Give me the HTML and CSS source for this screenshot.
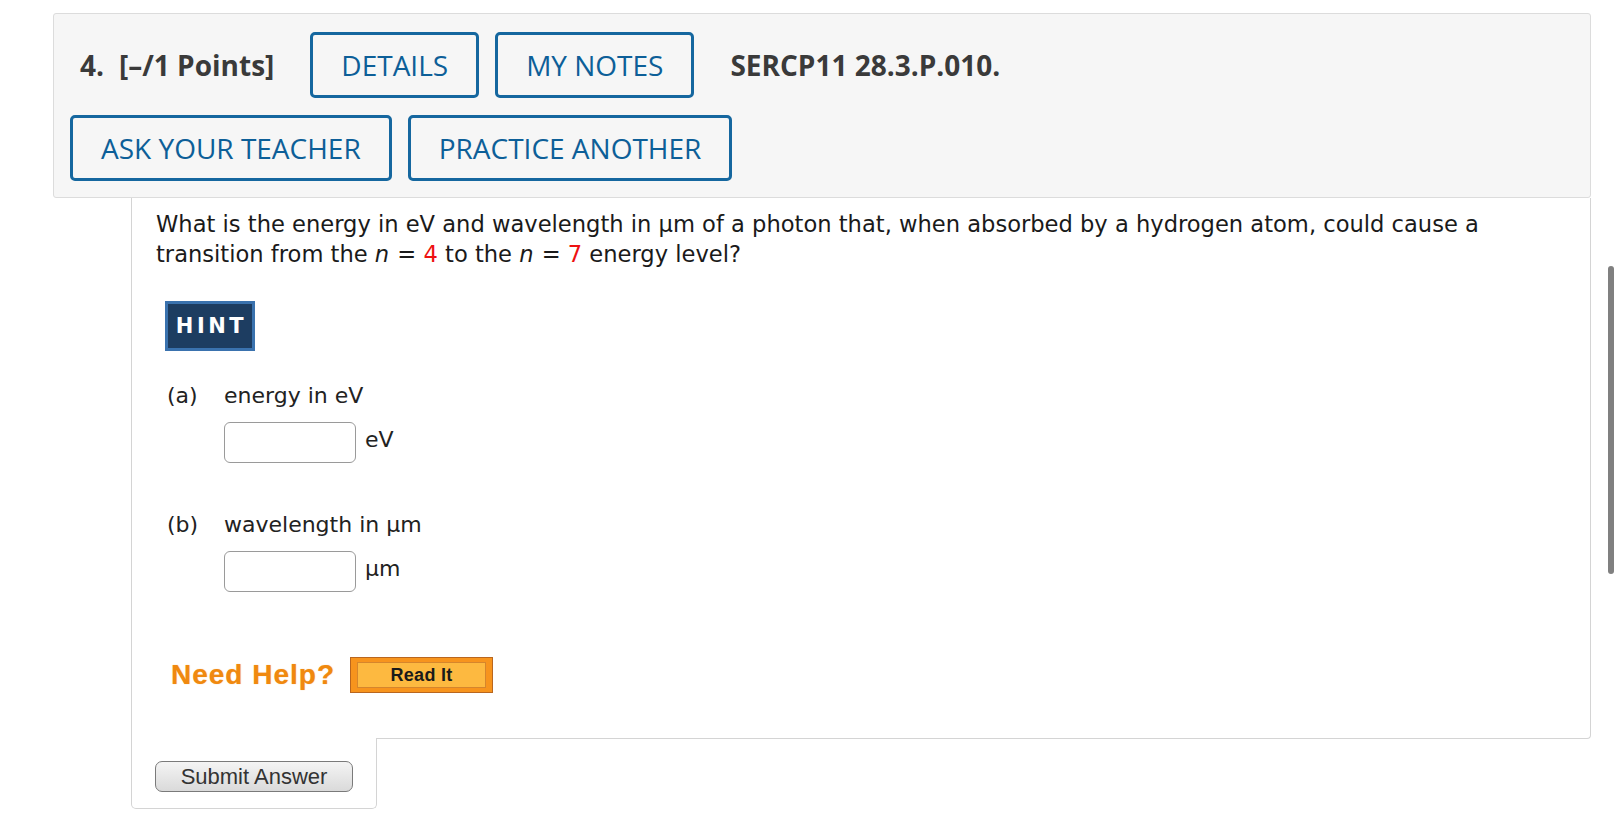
FILE: index.html
```html
<!DOCTYPE html>
<html lang="en">
<head>
<meta charset="utf-8">
<title>Question 4</title>
<link rel="stylesheet" href="styles.css">
</head>
<body>
<div class="page">
  <div class="qhead">
    <div class="row row-top">
      <span class="qnum">4.</span>
      <span class="points">[–/1 Points]</span>
      <span class="btn btn-first">DETAILS</span>
      <span class="btn">MY NOTES</span>
      <span class="qid">SERCP11 28.3.P.010.</span>
    </div>
    <div class="row row-bottom">
      <span class="btn">ASK YOUR TEACHER</span>
      <span class="btn">PRACTICE ANOTHER</span>
    </div>
  </div>

  <div class="qbody">
    <p class="question">What is the energy in eV and wavelength in µm of a photon that, when absorbed by a hydrogen atom, could cause a transition from the <i class="var">n</i> = <span class="red">4</span> to the <i class="var">n</i> = <span class="red">7</span> energy level?</p>

    <div class="hint">HINT</div>

    <div class="part part-a">
      <div class="part-label"><span class="letter">(a)</span><span>energy in eV</span></div>
      <div class="answer"><span class="input"></span><span class="unit">eV</span></div>
    </div>

    <div class="part part-b">
      <div class="part-label"><span class="letter">(b)</span><span>wavelength in µm</span></div>
      <div class="answer"><span class="input"></span><span class="unit">µm</span></div>
    </div>

    <div class="help">
      <span class="need">Need Help?</span>
      <span class="readit"><span class="readit-inner">Read It</span></span>
    </div>
  </div>

  <div class="submit-tab">
    <span class="submit">Submit Answer</span>
  </div>
</div>
<div class="scrollbar"></div>
</body>
</html>
```

FILE: styles.css
```css
html, body {
  margin: 0;
  padding: 0;
  background: #ffffff;
}

body {
  width: 1620px;
  height: 833px;
  overflow: hidden;
}

.page {
  padding: 13px 29px 0 53px;
}

.qhead {
  background: #f6f6f6;
  border: 1px solid #dcdcdc;
  border-radius: 3px;
  padding: 18px 0 16px;
  font-family: "Open Sans", "Liberation Sans", sans-serif;
}

.row {
  display: flex;
  align-items: center;
  height: 66px;
}

.row-top {
  padding-left: 26px;
}

.row-bottom {
  margin-top: 17px;
  padding-left: 16px;
  gap: 16px;
}

.qnum,
.points,
.qid {
  font-weight: 700;
  font-size: 28px;
  color: #3a3a3a;
}

.points {
  margin-left: 15px;
}

.qid {
  margin-left: 36px;
}

.btn {
  box-sizing: border-box;
  height: 66px;
  display: inline-flex;
  align-items: center;
  padding: 0 28px;
  border: 3px solid #15679f;
  border-radius: 5px;
  color: #0d5f98;
  font-size: 28px;
  font-weight: 500;
  white-space: nowrap;
}

.row-top .btn {
  margin-left: 16px;
}

.row-top .btn-first {
  margin-left: 36px;
}

.qbody {
  margin-left: 78px;
  border-left: 1px solid #d4d4d4;
  border-right: 1px solid #d4d4d4;
  border-bottom: 1px solid #d4d4d4;
  border-bottom-right-radius: 4px;
  padding: 11px 70px 45px 24px;
  font-family: "DejaVu Sans", Verdana, sans-serif;
  color: #222222;
  font-size: 22px;
  line-height: 30px;
}

.question {
  margin: 0;
  font-size: 22.6px;
  color: #1a1a1a;
}

.var {
  padding-right: 1px;
}

.red {
  color: #ee1111;
}

.hint {
  box-sizing: border-box;
  width: 90px;
  height: 50px;
  margin: 32px 0 0 9px;
  background: #1d3d61;
  border: 3px solid #3a72ae;
  color: #ffffff;
  font-weight: 700;
  font-size: 21px;
  letter-spacing: 3.5px;
  padding-left: 3px;
  display: flex;
  align-items: center;
  justify-content: center;
}

.part {
  margin-left: 11px;
}

.part-a {
  margin-top: 30px;
}

.part-b {
  margin-top: 47px;
}

.part-label {
  display: flex;
}

.letter {
  width: 57px;
}

.answer {
  display: flex;
  align-items: flex-start;
  margin: 11px 0 0 57px;
}

.input {
  box-sizing: border-box;
  width: 132px;
  height: 41px;
  border: 1px solid #9a9a9a;
  border-radius: 6px;
  background: #ffffff;
}

.unit {
  margin-left: 9px;
  padding-top: 3px;
}

.help {
  display: flex;
  align-items: center;
  margin: 65px 0 0 15px;
  font-family: "Liberation Sans", Arial, sans-serif;
}

.need {
  color: #f0890f;
  font-weight: 700;
  font-size: 28px;
  letter-spacing: 1px;
  text-shadow: 0 0 1px rgba(240, 137, 15, 0.6);
}

.readit {
  box-sizing: border-box;
  margin-left: 15px;
  width: 143px;
  height: 36px;
  padding: 4px 6px;
  background: #f7941d;
  border: 1px solid #b9661f;
  display: flex;
}

.readit-inner {
  flex: 1;
  display: flex;
  align-items: center;
  justify-content: center;
  background: #fdb940;
  border: 1px solid #d6862c;
  color: #1a1a1a;
  font-weight: 700;
  font-size: 18px;
  letter-spacing: 0.3px;
}

.submit-tab {
  box-sizing: border-box;
  width: 246px;
  margin: -1px 0 0 78px;
  padding: 23px 0 16px 23px;
  background: #ffffff;
  border-left: 1px solid #d4d4d4;
  border-right: 1px solid #d4d4d4;
  border-bottom: 1px solid #d4d4d4;
  border-bottom-left-radius: 5px;
  border-bottom-right-radius: 5px;
}

.submit {
  box-sizing: border-box;
  display: flex;
  align-items: center;
  justify-content: center;
  width: 198px;
  height: 31px;
  border: 1px solid #7a7a7a;
  border-radius: 7px;
  background: linear-gradient(#f4f4f4, #dadada);
  color: #333333;
  font-family: "Liberation Sans", Arial, sans-serif;
  font-size: 22px;
}

.scrollbar {
  position: fixed;
  top: 266px;
  right: 6px;
  width: 6px;
  height: 308px;
  border-radius: 3px;
  background: #808080;
}
```
